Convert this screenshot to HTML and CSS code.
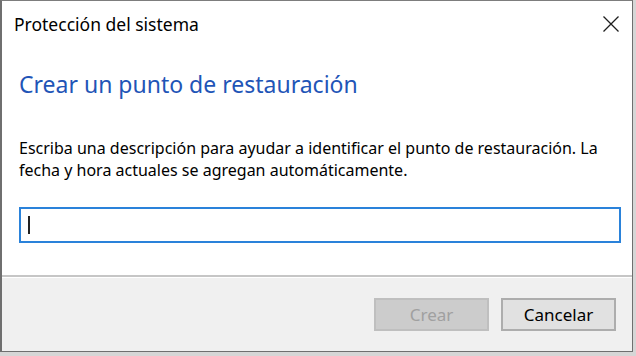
FILE: index.html
```html
<!DOCTYPE html>
<html lang="es">
<head>
<meta charset="utf-8">
<title>Protección del sistema</title>
<link rel="stylesheet" href="styles.css">
</head>
<body>
<div class="window">
  <div class="titlebar">
    <span class="title">Protección del sistema</span>
    <span class="close" aria-label="Cerrar">
      <svg width="16" height="16" viewBox="0 0 16 16"><path d="M0.5 0.5 L15.5 15.5 M15.5 0.5 L0.5 15.5" stroke="#1e1e1e" stroke-width="1.3" fill="none"/></svg>
    </span>
  </div>
  <div class="content">
    <h1 class="heading">Crear un punto de restauración</h1>
    <p class="desc">Escriba una descripción para ayudar a identificar el punto de restauración. La<br>fecha y hora actuales se agregan automáticamente.</p>
    <div class="input"><span class="caret"></span></div>
  </div>
  <div class="footer">
    <button class="btn btn-disabled" disabled>Crear</button>
    <button class="btn">Cancelar</button>
  </div>
</div>
</body>
</html>
```
FILE: styles.css
```css
html, body {
  margin: 0;
  padding: 0;
  background: #d6d6d6;
}
body {
  width: 636px;
  height: 356px;
  overflow: hidden;
  font-family: "Noto Sans", "Open Sans", sans-serif;
}
.window {
  width: 630px;
  height: 350px;
  background: #ffffff;
  border-left: 2px solid #6f6f6f;
  border-top: 1px solid #7d7d7d;
  border-right: 1px solid #6f6f6f;
  border-bottom: 1px solid #6f6f6f;
  display: flex;
  flex-direction: column;
}
.titlebar {
  height: 46px;
  flex: none;
  display: flex;
  align-items: center;
  justify-content: space-between;
  padding: 0 13px 0 12px;
}
.title {
  font-size: 17.5px;
  color: #000;
  margin-top: -1px;
}
.close {
  display: flex;
  width: 16px;
  height: 16px;
  margin-top: -1px;
}
.content {
  flex: 1;
  padding: 0 11px 0 17px;
}
.heading {
  margin: 22px 0 0 0;
  font-weight: normal;
  font-size: 23px;
  line-height: 30px;
  color: #1f55b7;
}
.desc {
  margin: 38px 0 0 0;
  font-size: 16px;
  line-height: 22px;
  color: #000;
}
.input {
  margin-top: 26px;
  height: 36px;
  box-sizing: border-box;
  border: 2px solid #2a82da;
  display: flex;
  align-items: center;
  padding-left: 7px;
}
.caret {
  width: 2px;
  height: 18px;
  background: #222;
}
.footer {
  height: 76px;
  flex: none;
  background: #f0f0f0;
  border-top: 2px solid #c6c6c6;
  box-shadow: inset 0 1px 0 #ffffff;
  display: flex;
  justify-content: flex-end;
  align-items: flex-start;
  padding: 21px 16px 0 0;
  gap: 12px;
  box-sizing: border-box;
}
.btn {
  width: 115px;
  height: 33px;
  font-family: "Noto Sans", "Open Sans", sans-serif;
  font-size: 17px;
  background: #e1e1e1;
  border: 2px solid #adadad;
  color: #000;
  padding: 0;
}
.btn-disabled {
  background: #cccccc;
  border-color: #bfbfbf;
  color: #a0a0a0;
}
```
